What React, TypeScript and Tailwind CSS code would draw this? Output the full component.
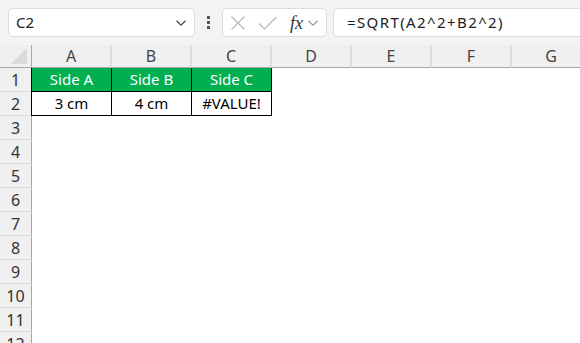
import React from 'react';

const cols = ['A', 'B', 'C', 'D', 'E', 'F', 'G'];
const rows = [1, 2, 3, 4, 5, 6, 7, 8, 9, 10, 11, 12];

const data: Record<number, string[]> = {
  1: ['Side A', 'Side B', 'Side C'],
  2: ['3 cm', '4 cm', '#VALUE!'],
};

function Chevron({ className }: { className?: string }) {
  return (
    <svg width="12" height="8" viewBox="0 0 12 8" className={className}>
      <path d="M1.5 1.8 L6 6.2 L10.5 1.8" fill="none" stroke="currentColor" strokeWidth="1.2" />
    </svg>
  );
}

function Toolbar() {
  return (
    <div className="h-[45px] bg-[#f3f3f3] flex items-center pl-2 shrink-0">
      <div className="w-[187px] h-[29px] bg-white border border-[#dcdcdc] rounded-[5px] flex items-center pl-[7px] pr-[7px]">
        <span className="flex-1 text-[15px] text-[#222]">C2</span>
        <Chevron className="text-[#444]" />
      </div>
      <div className="w-[27px] flex flex-col items-center gap-[2px]">
        <span className="w-[3px] h-[3px] bg-[#555]" />
        <span className="w-[3px] h-[3px] bg-[#555]" />
        <span className="w-[3px] h-[3px] bg-[#555]" />
      </div>
      <div className="w-[105px] h-[29px] bg-white border border-[#dcdcdc] rounded-[5px] flex items-center pl-[7px]">
        <svg width="16" height="16" viewBox="0 0 16 16" className="text-[#b8b8b8]">
          <path d="M1.5 1.5 L14.5 14.5 M14.5 1.5 L1.5 14.5" stroke="currentColor" strokeWidth="1.2" />
        </svg>
        <svg width="20" height="16" viewBox="0 0 20 16" className="ml-[12px] text-[#b8b8b8]">
          <path d="M1 8.5 L6.5 14 L18.5 2" fill="none" stroke="currentColor" strokeWidth="1.2" />
        </svg>
        <span className="ml-[12px] text-[18px] italic text-[#333] leading-none" style={{ fontFamily: '"Liberation Serif", serif' }}>
          fx
        </span>
        <Chevron className="ml-[4px] text-[#999]" />
      </div>
      <div className="ml-[6px] flex-1 h-[29px] bg-white border border-r-0 border-[#dcdcdc] rounded-l-[5px] flex items-center pl-[13px]">
        <span className="text-[15px] text-[#222] tracking-[1.4px]">=SQRT(A2^2+B2^2)</span>
      </div>
    </div>
  );
}

export default function App() {
  return (
    <div
      className="w-[580px] h-[343px] overflow-hidden bg-white flex flex-col"
      style={{ fontFamily: '"Noto Sans", "Open Sans", sans-serif' }}
    >
      <Toolbar />
      <div className="grid grid-cols-[32px_repeat(7,80px)] grid-rows-[23px] auto-rows-[24px]">
        <div className="relative bg-[#f0f0f0] border-r border-b border-[#a6a6a6]">
          <svg width="16" height="16" viewBox="0 0 16 16" className="absolute right-[4px] bottom-[3px]">
            <path d="M16 0 L16 16 L0 16 Z" fill="#dadada" />
          </svg>
        </div>
        {cols.map((c) => (
          <div
            key={c}
            className="bg-[#f0f0f0] border-b border-[#a6a6a6] border-r-2 border-r-[#dedede] flex items-center justify-center text-[16px] text-[#444]"
          >
            {c}
          </div>
        ))}
        {rows.map((r) => (
          <React.Fragment key={r}>
            <div className="bg-[#f0f0f0] border-r border-r-[#a6a6a6] border-b border-b-[#dcdcdc] flex items-center justify-center text-[16px] text-[#333]">
              {r}
            </div>
            {cols.map((c, i) => {
              const v = data[r]?.[i];
              if (v === undefined) return <div key={c} />;
              const head = r === 1;
              return (
                <div
                  key={c}
                  className={`flex items-center justify-center text-[15px] border-black border-r border-b ${
                    i === 0 ? 'border-l -ml-px' : ''
                  } ${head ? 'bg-[#00b050] text-white' : 'text-black'}`}
                >
                  {v}
                </div>
              );
            })}
          </React.Fragment>
        ))}
      </div>
    </div>
  );
}
